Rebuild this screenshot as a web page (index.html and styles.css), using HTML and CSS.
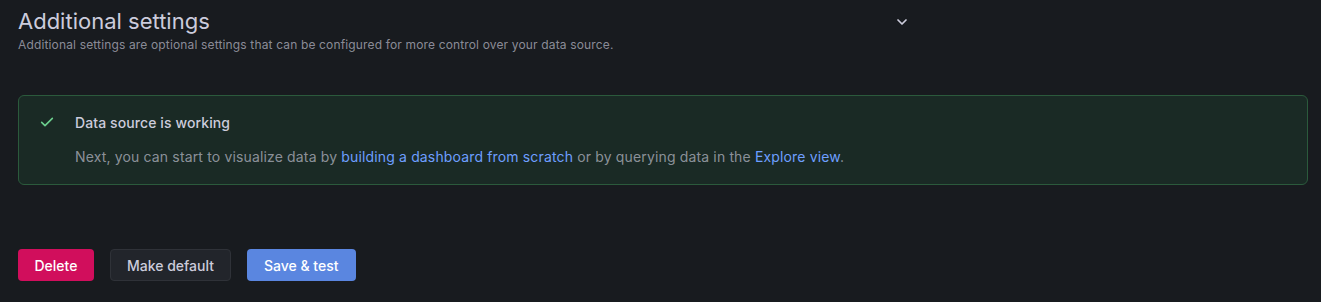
FILE: index.html
```html
<!DOCTYPE html>
<html lang="en">
<head>
    <meta charset="UTF-8">
    <meta name="viewport" content="width=device-width, initial-scale=1.0">
    <title>Data source settings</title>
    <link rel="stylesheet" href="styles.css">
</head>
<body>
    <div class="page">
        <div class="section">
            <div class="section-header">
                <h3 class="section-title">Additional settings</h3>
                <svg class="chevron" width="16" height="16" viewBox="0 0 24 24">
                    <path d="M6 9l6 6 6-6" fill="none" stroke="#ccccdc" stroke-width="2.6" stroke-linecap="round" stroke-linejoin="round"/>
                </svg>
            </div>
            <p class="section-desc">Additional settings are optional settings that can be configured for more control over your data source.</p>
        </div>

        <div class="alert-success">
            <svg class="alert-icon" width="16" height="16" viewBox="0 0 24 24">
                <path d="M4 12.5l5 5L20 6.5" fill="none" stroke="#6ccf8e" stroke-width="2.4" stroke-linecap="round" stroke-linejoin="round"/>
            </svg>
            <div class="alert-body">
                <div class="alert-title">Data source is working</div>
                <div class="alert-text">Next, you can start to visualize data by <a href="#">building a dashboard from scratch</a> or by querying data in the <a href="#">Explore view</a>.</div>
            </div>
        </div>

        <div class="actions">
            <button class="btn btn-danger">Delete</button>
            <button class="btn btn-secondary">Make default</button>
            <button class="btn btn-primary">Save &amp; test</button>
        </div>
    </div>
</body>
</html>
```

FILE: styles.css
```css
body {
    font-family: Inter, "Noto Sans", sans-serif;
    background-color: #181b1f;
    color: #ccccdc;
    margin: 0;
    padding: 0;
}

.page {
    padding: 0 13px 0 18px;
}

.section-header {
    display: flex;
    justify-content: space-between;
    align-items: center;
    width: 892px;
    padding-top: 8px;
}

.section-title {
    font-size: 22px;
    font-weight: 400;
    line-height: 26px;
    margin: 0;
    color: #ccccdc;
}

.chevron {
    margin-top: 1px;
}

.section-desc {
    font-size: 12px;
    line-height: 18px;
    letter-spacing: 0.15px;
    margin: 2px 0 0 0;
    color: rgba(204, 204, 220, 0.65);
}

.alert-success {
    display: flex;
    margin-top: 41px;
    padding: 17px 16px 17px 20px;
    border: 1px solid #2b5a3c;
    border-radius: 6px;
    background-color: #1a2a25;
}

.alert-icon {
    margin: 1px 20px 0 0;
    flex-shrink: 0;
}

.alert-title {
    font-size: 14px;
    font-weight: 500;
    line-height: 20px;
    letter-spacing: 0.1px;
    color: #ccccdc;
}

.alert-text {
    font-size: 14px;
    line-height: 20px;
    letter-spacing: 0.15px;
    margin-top: 14px;
    color: rgba(204, 204, 220, 0.65);
}

.alert-text a {
    color: #6e9fff;
    text-decoration: none;
}

.actions {
    display: flex;
    gap: 16px;
    margin-top: 64px;
}

.btn {
    font-family: Inter, "Noto Sans", sans-serif;
    font-size: 14px;
    font-weight: 500;
    height: 32px;
    padding: 0 16px;
    border-radius: 4px;
    border: 1px solid transparent;
    cursor: pointer;
}

.btn-danger {
    padding: 0 15.5px;
    background-color: #d10e5c;
    color: #ffffff;
}

.btn-secondary {
    background-color: #22252b;
    border-color: #2f3238;
    color: #ccccdc;
}

.btn-primary {
    background-color: #5a86e0;
    color: #ffffff;
}
```
